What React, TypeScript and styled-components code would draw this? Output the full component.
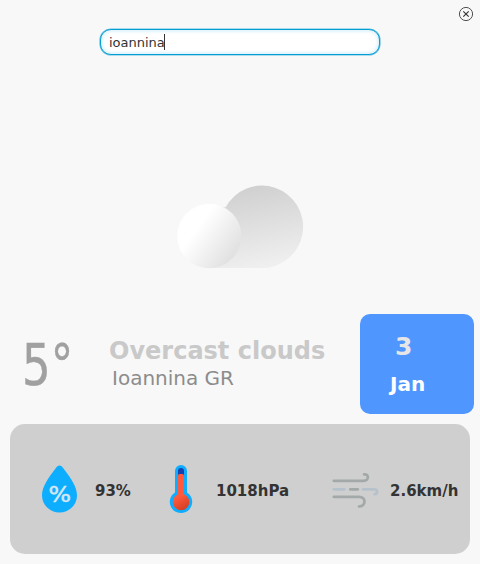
import React, { useState } from "react";
import styled, { createGlobalStyle } from "styled-components";

const GlobalStyle = createGlobalStyle`
  * { box-sizing: border-box; }
  body { margin: 0; background: #f8f8f8; }
`;

const Window = styled.main`
  width: 480px;
  height: 564px;
  display: flex;
  flex-direction: column;
  background: #f8f8f8;
  font-family: "DejaVu Sans", sans-serif;
  overflow: hidden;
`;

const TitleBar = styled.header`
  height: 28px;
  display: flex;
  justify-content: flex-end;
  align-items: center;
  padding-right: 6px;
`;

const CloseButton = styled.button`
  width: 16px;
  height: 16px;
  padding: 0;
  border: 0;
  background: none;
  svg { display: block; }
`;

const SearchField = styled.label`
  width: 280px;
  height: 26px;
  margin: 1px auto;
  display: flex;
  align-items: center;
  padding: 1px 8px 0;
  border: 1px solid #039ed3;
  border-radius: 11px;
  background: #fff;
  box-shadow: inset 0 0 3px 2px #dff3fa, 0 0 0 0.6px #62bfe0;
`;

const SearchInput = styled.input<{ $chars: number }>`
  width: ${(p) => Math.max(p.$chars, 1) * 7}px;
  max-width: 258px;
  height: 18px;
  padding: 0;
  border: 0;
  outline: 0;
  background: none;
  color: #333;
  font: 13px/18px "DejaVu Sans", sans-serif;
`;

const Caret = styled.span`
  width: 1px;
  height: 16px;
  margin: -1px 0 0 -1px;
  background: #333;
`;

const Sky = styled.section`
  height: 258px;
  display: flex;
  justify-content: center;
  padding-top: 129px;
  svg { display: block; }
`;

const Summary = styled.section`
  height: 100px;
  display: grid;
  grid-template-columns: 109px 251px 114px;
`;

const Temperature = styled.div`
  padding: 16px 0 0 22px;
  font-size: 57px;
  line-height: 70px;
  color: #a0a0a0;
  white-space: nowrap;
  span {
    display: inline-block;
    transform: scaleX(0.79);
    transform-origin: 0 0;
    -webkit-text-stroke: 0.4px #a0a0a0;
  }
`;

const Conditions = styled.div`
  padding-top: 22px;
`;

const Description = styled.h1`
  margin: 0;
  font-size: 24px;
  font-weight: 700;
  line-height: 30px;
  color: #c9c9c9;
  white-space: nowrap;
`;

const Place = styled.p`
  margin: 0 0 0 3px;
  font-size: 20px;
  line-height: 24px;
  color: #8c8c8c;
`;

const DateCard = styled.div`
  height: 100px;
  border-radius: 10px;
  background: #5096ff;
  display: flex;
  flex-direction: column;
  align-items: flex-start;
  padding: 18px 0 0 30px;
  font-weight: 700;
`;

const Day = styled.span`
  margin-left: 5px;
  font-size: 25px;
  line-height: 30px;
  color: #e6e6e6;
`;

const Month = styled.span`
  margin-top: 10px;
  font-size: 20px;
  line-height: 24px;
  color: #fff;
`;

const Metrics = styled.section`
  width: 460px;
  height: 130px;
  margin: 10px 0 0 10px;
  display: grid;
  grid-template-columns: 147px 168px 145px;
  align-items: center;
  border-radius: 15px;
  background: #cfcfcf;
`;

const Metric = styled.div<{ $inset: number; $gap: number }>`
  display: flex;
  align-items: center;
  gap: ${(p) => p.$gap}px;
  padding-left: ${(p) => p.$inset}px;
  height: 52px;
  svg { display: block; flex: none; }
`;

const Value = styled.span`
  font-size: 15px;
  font-weight: 700;
  line-height: 20px;
  color: #333;
  padding-top: 3px;
`;

const CloudIcon = () => (
  <svg width="128" height="84" viewBox="0 0 128 84">
    <defs>
      <linearGradient id="back" x1="0.3" y1="0" x2="0.6" y2="1">
        <stop offset="0" stopColor="#cdcdcd" />
        <stop offset="1" stopColor="#efefef" />
      </linearGradient>
      <linearGradient id="front" x1="0.12" y1="0.2" x2="0.88" y2="0.75">
        <stop offset="0.28" stopColor="#fff" />
        <stop offset="1" stopColor="#e2e2e2" />
      </linearGradient>
    </defs>
    <path d="M34 83A32 32 0 0 1 34 19L49.5 22.5A41.2 41.2 0 1 1 86 83Z" fill="url(#back)" />
    <circle cx="33.3" cy="51" r="32.2" fill="url(#front)" />
  </svg>
);

const HumidityIcon = () => (
  <svg width="36" height="48" viewBox="0 0 36 48">
    <path d="M17.5 .5C19 .5 20.3 1.8 21.3 3.2C29 13 35 22 35 30.5A17.5 17 0 0 1 0 30.5C0 22 6 13 13.7 3.2C14.7 1.8 16 .5 17.5 .5Z" fill="#0daeff" />
    <text
      x="17.7"
      y="36.5"
      textAnchor="middle"
      fontFamily="DejaVu Sans, sans-serif"
      fontSize="21"
      textLength="22.5"
      lengthAdjust="spacingAndGlyphs"
      fill="#d4e8f3"
      stroke="#d4e8f3"
      strokeWidth="0.5"
    >%</text>
  </svg>
);

const ThermometerIcon = () => (
  <svg width="24" height="50" viewBox="0 0 24 50">
    <defs>
      <linearGradient id="bulb" x1="0.2" y1="0" x2="0.8" y2="1">
        <stop offset="0.2" stopColor="#ff5a3d" />
        <stop offset="1" stopColor="#cf3b20" />
      </linearGradient>
    </defs>
    <path d="M6 7A6 6 0 0 1 18 7V28.4A11.2 11.2 0 1 1 6 28.4Z" fill="#0daeff" />
    <path d="M9 7A3 3 0 0 1 15 7V13H9Z" fill="#1540ad" />
    <circle cx="12" cy="38" r="8.3" fill="url(#bulb)" />
    <path d="M9 11.5Q9 10 10.5 10H13.5Q15 10 15 11.5V32H9Z" fill="#ff5a3d" />
  </svg>
);

const WindIcon = () => (
  <svg width="48" height="38" viewBox="0 0 48 38" fill="none" strokeWidth="2.7" strokeLinecap="round">
    <g stroke="#a2a9a8">
      <path d="M1.8 10.8H31.5C37.2 10.8 37.2 3.6 32 4.4" />
      <path d="M18.3 19.3H25.8" />
      <path d="M1.8 26.8H27C34.5 26.8 34.1 36.5 27 36.5" />
    </g>
    <g stroke="#b6c2cb">
      <path d="M1.8 19.3H12.3" />
      <path d="M31 19.3H42C46.3 19.3 45.8 24.2 42.5 24.2" />
    </g>
  </svg>
);

export default function App() {
  const [city, setCity] = useState("ioannina");
  return (
    <>
      <GlobalStyle />
      <Window>
        <TitleBar>
          <CloseButton aria-label="Close">
            <svg width="16" height="16" viewBox="0 0 16 16" fill="none" stroke="#333">
              <circle cx="8" cy="8" r="6.6" strokeWidth=".85" />
              <path d="M5.3 5.3L10.7 10.7M10.7 5.3L5.3 10.7" strokeWidth="1.1" />
            </svg>
          </CloseButton>
        </TitleBar>
        <SearchField>
          <SearchInput $chars={city.length} aria-label="City" value={city} onChange={(e) => setCity(e.target.value)} />
          <Caret />
        </SearchField>
        <Sky><CloudIcon /></Sky>
        <Summary>
          <Temperature><span>5°</span></Temperature>
          <Conditions>
            <Description>Overcast clouds</Description>
            <Place>Ioannina GR</Place>
          </Conditions>
          <DateCard>
            <Day>3</Day>
            <Month>Jan</Month>
          </DateCard>
        </Summary>
        <Metrics>
          <Metric $inset={32} $gap={17}><HumidityIcon /><Value>93%</Value></Metric>
          <Metric $inset={12} $gap={23}><ThermometerIcon /><Value>1018hPa</Value></Metric>
          <Metric $inset={7} $gap={10}><WindIcon /><Value>2.6km/h</Value></Metric>
        </Metrics>
      </Window>
    </>
  );
}
